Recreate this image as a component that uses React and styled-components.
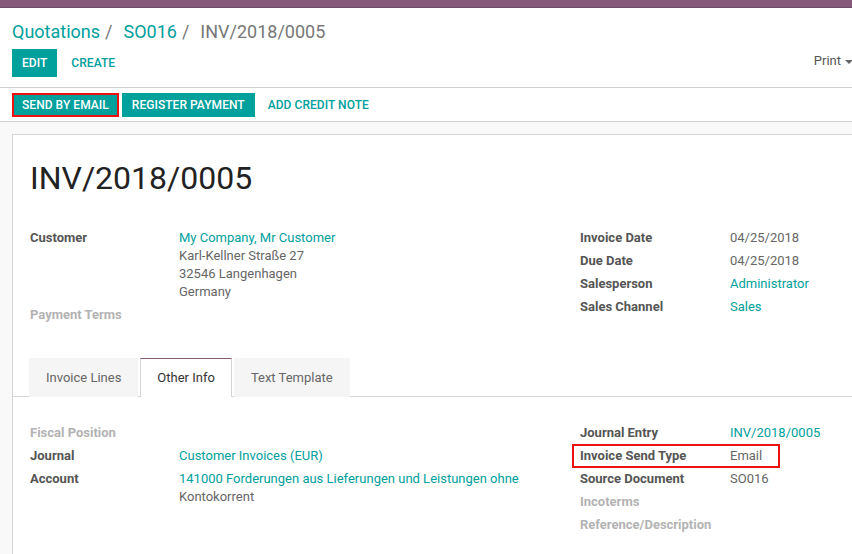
import React from 'react'
import styled, { createGlobalStyle, css } from 'styled-components'

const GlobalStyle = createGlobalStyle`
    body {
        margin: 0;
        font-family: Roboto, "Noto Sans", sans-serif;
        font-size: 13px;
        color: #4c4c4c;
        background: #f9f9f9;
        overflow: hidden;
    }
`

const TEAL = '#00a09d'
const MARK = '#ee1111'

const TopBar = styled.div`
    height: 7px;
    background: #875a7b;
    border-bottom: 1px solid #6f4a66;
`

const ControlPanel = styled.div`
    background: #fff;
    padding: 12px 0 10px 12px;
    border-bottom: 1px solid #cfcfcf;
`

const Breadcrumb = styled.div`
    font-size: 18px;
    line-height: 24px;
    color: #777;
    display: flex;
`

const Crumb = styled.span`
    color: ${p => (p.active ? '#777' : TEAL)};
`

const Separator = styled.span`
    padding: 0 11px 0 5px;
`

const ButtonRow = styled.div`
    display: flex;
    align-items: flex-start;
    margin-top: 5px;
    gap: 4px;
`

const Button = styled.button`
    font-family: inherit;
    font-size: 12px;
    font-weight: 500;
    letter-spacing: 0.05px;
    text-transform: uppercase;
    line-height: 16px;
    padding: ${p => (p.small ? '4px 10px' : '6px 10px')};
    border: none;
    border-radius: 0;
    background: ${p => (p.primary ? TEAL : 'transparent')};
    color: ${p => (p.primary ? '#fff' : TEAL)};
    ${p => p.marked && css`box-shadow: inset 0 0 0 2px ${MARK};`}
`

const Print = styled.div`
    margin-left: auto;
    line-height: 24px;
    color: #555;
    display: flex;
    align-items: center;
    gap: 4px;
    margin-right: -1px;
`

const Caret = styled.span`
    width: 0;
    height: 0;
    border-left: 4px solid transparent;
    border-right: 4px solid transparent;
    border-top: 4px solid #666;
    margin-top: 2px;
`

const StatusBar = styled.div`
    background: #fff;
    padding: 5px 0 4px 12px;
    border-bottom: 1px solid #cfcfcf;
    display: flex;
    gap: 3px;
`

const Content = styled.div`
    padding: 12px 0 0 12px;
`

const Sheet = styled.div`
    background: #fff;
    border: 1px solid #d5d5d5;
    border-right: none;
    padding: 24px 0 0 17px;
    min-height: 500px;
`

const Title = styled.h1`
    margin: 0;
    font-size: 32px;
    font-weight: 400;
    line-height: 38px;
    color: #222;
`

const Groups = styled.div`
    display: grid;
    grid-template-columns: 550px 1fr;
    margin-top: ${p => p.top}px;
`

const Group = styled.div`
    display: flex;
    flex-direction: column;
`

const Row = styled.div`
    display: grid;
    grid-template-columns: ${p => p.labelWidth || 149}px 1fr;
    line-height: 18px;
    padding-bottom: 5px;
    position: relative;
    ${p => p.marked && css`
        &::after {
            content: '';
            position: absolute;
            left: -8px;
            top: -3px;
            width: 208px;
            height: 24px;
            border: 2px solid ${MARK};
            box-sizing: border-box;
        }
    `}
`

const Label = styled.div`
    font-weight: 700;
    color: ${p => (p.muted ? '#b3b3b3' : '#555')};
`

const Value = styled.div`
    color: #666;
    padding-right: 16px;
`

const Link = styled.span`
    color: ${TEAL};
`

const Notebook = styled.div`
    margin: 29px 0 0 -17px;
`

const Tabs = styled.div`
    display: flex;
    gap: 2px;
    padding-left: 16px;
    border-bottom: 1px solid #d5d5d5;
`

const Tab = styled.div`
    line-height: 18px;
    padding: 10px 16px 9px;
    border: 1px solid transparent;
    border-bottom: none;
    margin-bottom: -1px;
    background: ${p => (p.active ? '#fff' : '#f5f5f5')};
    color: ${p => (p.active ? '#333' : '#666')};
    ${p => p.active && css`
        border-color: #d5d5d5;
        border-top-color: #875a7b;
        padding-bottom: 10px;
    `}
`

const TabPane = styled.div`
    padding: 27px 0 0 17px;
`

function Field({ label, muted, marked, labelWidth, children }) {
    return (
        <Row marked={marked} labelWidth={labelWidth}>
            <Label muted={muted}>{label}</Label>
            <Value>{children}</Value>
        </Row>
    )
}

export default function App() {
    return (
        <>
            <GlobalStyle />
            <TopBar />
            <ControlPanel>
                <Breadcrumb>
                    <Crumb>Quotations</Crumb>
                    <Separator>/</Separator>
                    <Crumb>SO016</Crumb>
                    <Separator>/</Separator>
                    <Crumb active>INV/2018/0005</Crumb>
                </Breadcrumb>
                <ButtonRow>
                    <Button primary>Edit</Button>
                    <Button>Create</Button>
                    <Print>Print <Caret /></Print>
                </ButtonRow>
            </ControlPanel>
            <StatusBar>
                <Button primary small marked>Send by Email</Button>
                <Button primary small>Register Payment</Button>
                <Button small>Add Credit Note</Button>
            </StatusBar>
            <Content>
                <Sheet>
                    <Title>INV/2018/0005</Title>
                    <Groups top={32}>
                        <Group>
                            <Field label="Customer">
                                <Link>My Company, Mr Customer</Link><br />
                                Karl-Kellner Straße 27<br />
                                32546 Langenhagen<br />
                                Germany
                            </Field>
                            <Field label="Payment Terms" muted />
                        </Group>
                        <Group>
                            <Field label="Invoice Date" labelWidth={150}>04/25/2018</Field>
                            <Field label="Due Date" labelWidth={150}>04/25/2018</Field>
                            <Field label="Salesperson" labelWidth={150}><Link>Administrator</Link></Field>
                            <Field label="Sales Channel" labelWidth={150}><Link>Sales</Link></Field>
                        </Group>
                    </Groups>
                    <Notebook>
                        <Tabs>
                            <Tab>Invoice Lines</Tab>
                            <Tab active>Other Info</Tab>
                            <Tab>Text Template</Tab>
                        </Tabs>
                        <TabPane>
                            <Groups top={0}>
                                <Group>
                                    <Field label="Fiscal Position" muted />
                                    <Field label="Journal"><Link>Customer Invoices (EUR)</Link></Field>
                                    <Field label="Account">
                                        <Link>141000 Forderungen aus Lieferungen und Leistungen ohne</Link><br />
                                        Kontokorrent
                                    </Field>
                                </Group>
                                <Group>
                                    <Field label="Journal Entry" labelWidth={150}><Link>INV/2018/0005</Link></Field>
                                    <Field label="Invoice Send Type" labelWidth={150} marked>Email</Field>
                                    <Field label="Source Document" labelWidth={150}>SO016</Field>
                                    <Field label="Incoterms" labelWidth={150} muted />
                                    <Field label="Reference/Description" labelWidth={150} muted />
                                </Group>
                            </Groups>
                        </TabPane>
                    </Notebook>
                </Sheet>
            </Content>
        </>
    )
}
